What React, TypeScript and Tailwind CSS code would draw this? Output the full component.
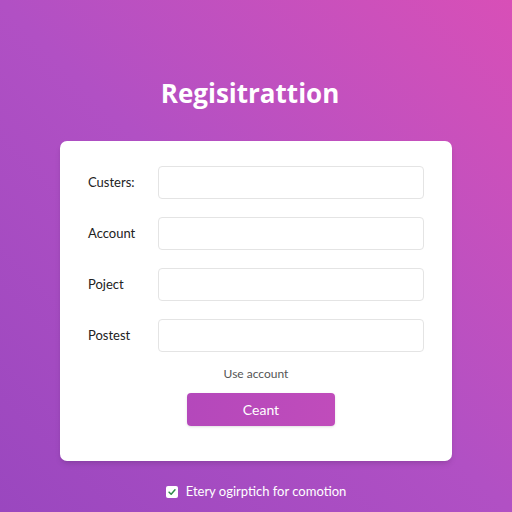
const fields = ["Custers:", "Account", "Poject", "Postest"];

export default function App() {
  return (
    <div
      className="flex h-[512px] w-full flex-col items-center overflow-hidden bg-gradient-to-tr from-[#9a47bf] via-[#b150c4] to-[#d84fb7]"
      style={{ fontFamily: "Lato, 'Open Sans', sans-serif" }}
    >
      <h1
        className="mt-[76px] pr-[12px] text-[26px] font-bold leading-[34px] text-white"
        style={{ fontFamily: "'Open Sans', sans-serif" }}
      >
        Regisitrattion
      </h1>

      <div className="mt-[31px] w-[392px] rounded-[7px] bg-white pb-[35px] pl-[28px] pr-[28px] pt-[25px] shadow-md">
        <div className="flex flex-col gap-[18px]">
          {fields.map((label) => (
            <div key={label} className="flex items-center">
              <label className="w-[70px] text-[13px] text-[#222]">{label}</label>
              <input
                type="text"
                className="h-[33px] flex-1 rounded-[4px] border border-[#e4e4e4] bg-white px-2 text-[13px] outline-none"
              />
            </div>
          ))}
        </div>

        <p className="mt-[13px] text-center text-[12px] leading-[18px] text-[#555]">Use account</p>

        <div className="mt-[10px] flex justify-center pl-[10px]">
          <button className="h-[33px] w-[148px] rounded-[4px] bg-gradient-to-r from-[#b448bb] to-[#c04cbb] text-[14px] text-white shadow-sm">
            Ceant
          </button>
        </div>
      </div>

      <div className="mt-[21px] flex items-center gap-[8px]">
        <span className="flex h-[12px] w-[12px] items-center justify-center rounded-[2px] bg-white">
          <svg viewBox="0 0 12 12" className="h-[10px] w-[10px]">
            <path d="M2.5 6.2 L5 8.6 L9.6 3.4" fill="none" stroke="#2f8a4a" strokeWidth="1.8" strokeLinecap="round" strokeLinejoin="round" />
          </svg>
        </span>
        <span className="text-[13px] text-white">Etery ogirptich for comotion</span>
      </div>
    </div>
  );
}
